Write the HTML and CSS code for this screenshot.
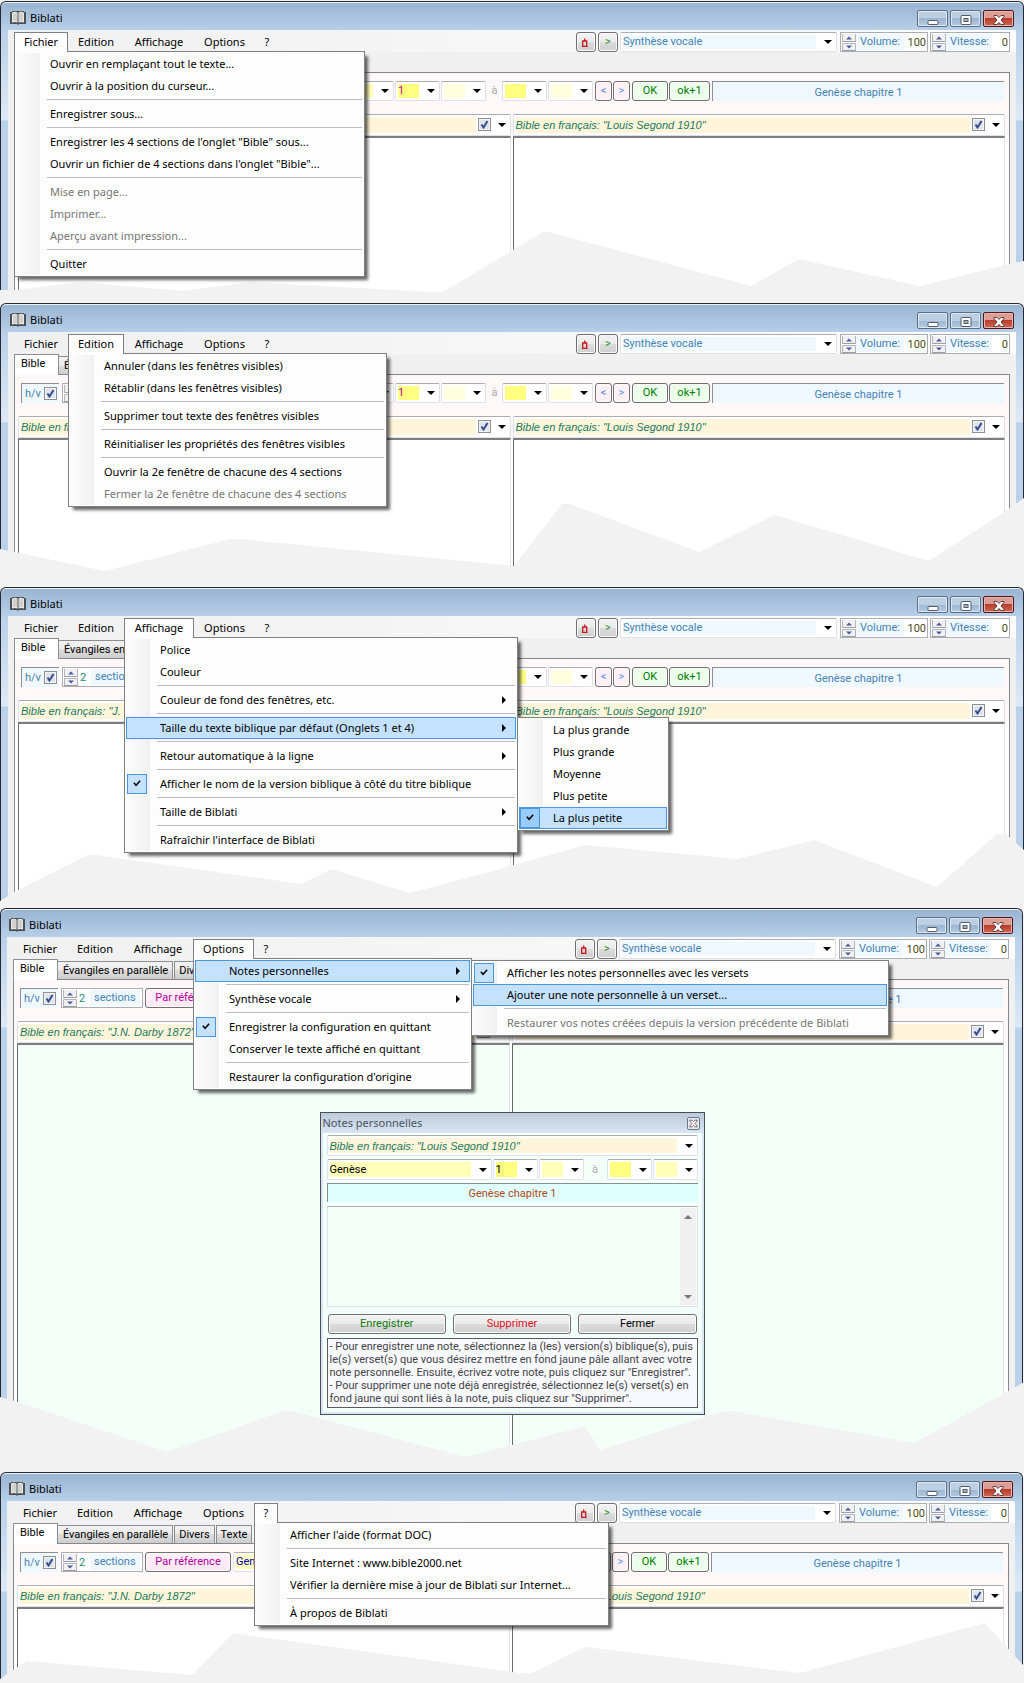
FILE: index.html
```html
<!DOCTYPE html>
<html lang="fr">
<head>
<meta charset="utf-8">
<title>Biblati - menus</title>
<link rel="stylesheet" href="styles.css">
</head>
<body>
<svg class="defs" width="0" height="0" aria-hidden="true">
  <symbol id="book" viewBox="0 0 16 14">
    <path d="M0 1h2v-1h12v1h2v12h-7l-1 1-1-1H0z" fill="#4b5055"/>
    <path d="M2 1.500q3-1.500 5.500 0v10q-2.500-1-5.500 0zM14 1.500q-3-1.500-5.500 0v10q2.500-1 5.500 0z" fill="#e9e9e4"/>
    <path d="M4 2v8M6 2v8M10 2v8M12 2v8" stroke="#b9bab6"/>
  </symbol>
  <symbol id="min" viewBox="0 0 12 10"><rect x="1" y="5.500" width="10" height="4" rx="1" fill="#fff" stroke="#535b66"/></symbol>
  <symbol id="max" viewBox="0 0 12 10"><rect x="1" y=".5" width="10" height="9" rx="1" fill="#fff" stroke="#535b66"/><rect x="4" y="3.500" width="4" height="3" fill="#9fb7d0" stroke="#535b66"/></symbol>
  <symbol id="close" viewBox="0 0 12 10"><path d="M1 .5h3l2 2 2-2h3v1L8 5l3 3.500v1H8l-2-2-2 2H1v-1L4 5 1 1.500z" fill="#fff" stroke="#5c3a3a"/></symbol>
  <symbol id="updown" viewBox="0 0 14 17">
    <path d="M.5 0v7.500h13V0M.5 17V9.500h13V17" fill="#f1f1f4" stroke="#b4b5bb"/>
    <path d="M.5 7.500h13M.5 16.500h13" stroke="#9d9ea4"/>
    <path d="M4 5.500h6L7 2.500zM4 11.500h6L7 14.500z" fill="#4d5a9c"/>
  </symbol>
  <symbol id="tick" viewBox="0 0 20 20"><path d="M6.500 8.500L9 11.500 13.500 6.500" fill="none" stroke="#000" stroke-width="1.700"/></symbol>
  <symbol id="arrow" viewBox="0 0 4 8"><path d="M0 0l4 4-4 4z"/></symbol>
  <symbol id="bell" viewBox="0 0 8 9"><path d="M1 8.500h5.500M1.700 8V3h4v5M3.700 3V.5" fill="none" stroke="#c8141e" stroke-width="1.300"/></symbol>
</svg>

<section class="shot">
  <div class="window">
    <header class="titlebar"><svg class="book"><use href="#book"/></svg><h1>Biblati</h1>
      <button class="cap" aria-label="Réduire"><svg><use href="#min"/></svg></button><button class="cap" aria-label="Agrandir"><svg><use href="#max"/></svg></button><button class="cap close" aria-label="Fermer"><svg><use href="#close"/></svg></button></header>
    <div class="client">
      <div class="menubar">
        <ul class="menus">
          <li><button class="top open">Fichier</button>
            <ul class="drop w-file">
              <li><button>Ouvrir en remplaçant tout le texte...</button></li>
              <li><button>Ouvrir à la position du curseur...</button></li>
              <li class="sep"></li>
              <li><button>Enregistrer sous...</button></li>
              <li class="sep"></li>
              <li><button>Enregistrer les 4 sections de l'onglet "Bible" sous...</button></li>
              <li><button>Ouvrir un fichier de 4 sections dans l'onglet "Bible"...</button></li>
              <li class="sep"></li>
              <li><button disabled>Mise en page...</button></li>
              <li><button disabled>Imprimer...</button></li>
              <li><button disabled>Aperçu avant impression...</button></li>
              <li class="sep"></li>
              <li><button>Quitter</button></li>
            </ul></li>
          <li><button class="top">Edition</button></li>
          <li><button class="top">Affichage</button></li>
          <li><button class="top">Options</button></li>
          <li><button class="top">?</button></li>
        </ul>
        <div class="voice">
          <button class="btn sq" aria-label="Alerte"><svg class="bell"><use href="#bell"/></svg></button><button class="btn sq go">&gt;</button>
          <select class="combo blue" aria-label="Voix"><option>Synthèse vocale</option></select>
          <label class="spin vol"><svg class="ud"><use href="#updown"/></svg><span>Volume:</span><input value="100"></label>
          <label class="spin rate"><svg class="ud"><use href="#updown"/></svg><span>Vitesse:</span><input value="0"></label>
        </div>
      </div>
      <div class="tabs"><button class="tab on">Bible</button></div>
      <div class="panel">
        <div class="tools">
          <div class="lead"></div>
          <select class="combo pale num" aria-label="Livre"><option></option></select>
          <select class="combo yellow num purple" aria-label="Chapitre"><option>1</option></select>
          <select class="combo ivory num" aria-label="Verset"><option></option></select>
          <span class="to">à</span>
          <select class="combo yellow num" aria-label="Chapitre final"><option></option></select>
          <select class="combo ivory num" aria-label="Verset final"><option></option></select>
          <button class="btn nav">&lt;</button><button class="btn nav">&gt;</button>
          <button class="btn ok">OK</button><button class="btn ok wide">ok+1</button>
          <output class="status">Genèse chapitre 1</output>
        </div>
        <div class="panes">
          <div class="pane"><div class="version"><select class="combo cream" aria-label="Version"><option></option></select><input type="checkbox" class="chk" checked aria-label="Afficher"></div><div class="text"></div></div>
          <div class="pane"><div class="version"><select class="combo cream" aria-label="Version"><option>Bible en français: "Louis Segond 1910"</option></select><input type="checkbox" class="chk" checked aria-label="Afficher"></div><div class="text h1"></div></div>
        </div>
      </div>
    </div>
  </div>
  <svg class="torn" viewBox="0 0 1024 302" preserveAspectRatio="none"><path d="M0 290H15L80 282 183 291 250 282 430 292H443L543 232H549L751 286 799 259 920 286 1013 263 1024 261V302H0z"/></svg>
</section>

<section class="shot">
  <div class="window">
    <header class="titlebar"><svg class="book"><use href="#book"/></svg><h1>Biblati</h1>
      <button class="cap" aria-label="Réduire"><svg><use href="#min"/></svg></button><button class="cap" aria-label="Agrandir"><svg><use href="#max"/></svg></button><button class="cap close" aria-label="Fermer"><svg><use href="#close"/></svg></button></header>
    <div class="client">
      <div class="menubar">
        <ul class="menus">
          <li><button class="top">Fichier</button></li>
          <li><button class="top open">Edition</button>
            <ul class="drop w-edit">
              <li><button>Annuler (dans les fenêtres visibles)</button></li>
              <li><button>Rétablir (dans les fenêtres visibles)</button></li>
              <li class="sep"></li>
              <li><button>Supprimer tout texte des fenêtres visibles</button></li>
              <li class="sep"></li>
              <li><button>Réinitialiser les propriétés des fenêtres visibles</button></li>
              <li class="sep"></li>
              <li><button>Ouvrir la 2e fenêtre de chacune des 4 sections</button></li>
              <li><button disabled>Fermer la 2e fenêtre de chacune des 4 sections</button></li>
            </ul></li>
          <li><button class="top">Affichage</button></li>
          <li><button class="top">Options</button></li>
          <li><button class="top">?</button></li>
        </ul>
        <div class="voice">
          <button class="btn sq" aria-label="Alerte"><svg class="bell"><use href="#bell"/></svg></button><button class="btn sq go">&gt;</button>
          <select class="combo blue" aria-label="Voix"><option>Synthèse vocale</option></select>
          <label class="spin vol"><svg class="ud"><use href="#updown"/></svg><span>Volume:</span><input value="100"></label>
          <label class="spin rate"><svg class="ud"><use href="#updown"/></svg><span>Vitesse:</span><input value="0"></label>
        </div>
      </div>
      <div class="tabs"><button class="tab on">Bible</button><button class="tab">É</button></div>
      <div class="panel">
        <div class="tools">
          <div class="lead">
            <label class="hv">h/v<input type="checkbox" class="chk" checked></label>
            <div class="spin sect"><svg class="ud"><use href="#updown"/></svg></div>
          </div>
          <select class="combo pale num" aria-label="Livre"><option></option></select>
          <select class="combo yellow num purple" aria-label="Chapitre"><option>1</option></select>
          <select class="combo ivory num" aria-label="Verset"><option></option></select>
          <span class="to">à</span>
          <select class="combo yellow num" aria-label="Chapitre final"><option></option></select>
          <select class="combo ivory num" aria-label="Verset final"><option></option></select>
          <button class="btn nav">&lt;</button><button class="btn nav">&gt;</button>
          <button class="btn ok">OK</button><button class="btn ok wide">ok+1</button>
          <output class="status">Genèse chapitre 1</output>
        </div>
        <div class="panes">
          <div class="pane"><div class="version"><select class="combo cream" aria-label="Version"><option>Bible en français</option></select><input type="checkbox" class="chk" checked aria-label="Afficher"></div><div class="text"></div></div>
          <div class="pane"><div class="version"><select class="combo cream" aria-label="Version"><option>Bible en français: "Louis Segond 1910"</option></select><input type="checkbox" class="chk" checked aria-label="Afficher"></div><div class="text h2"></div></div>
        </div>
      </div>
    </div>
  </div>
  <svg class="torn" viewBox="0 0 1024 284" preserveAspectRatio="none"><path d="M0 247L15 250 105 269 230 237H240L514 264 562 202H570L699 250 775 213 929 259 1010 206 1024 196V284H0z"/></svg>
</section>

<section class="shot">
  <div class="window">
    <header class="titlebar"><svg class="book"><use href="#book"/></svg><h1>Biblati</h1>
      <button class="cap" aria-label="Réduire"><svg><use href="#min"/></svg></button><button class="cap" aria-label="Agrandir"><svg><use href="#max"/></svg></button><button class="cap close" aria-label="Fermer"><svg><use href="#close"/></svg></button></header>
    <div class="client">
      <div class="menubar">
        <ul class="menus">
          <li><button class="top">Fichier</button></li>
          <li><button class="top">Edition</button></li>
          <li><button class="top open">Affichage</button>
            <ul class="drop w-view">
              <li><button>Police</button></li>
              <li><button>Couleur</button></li>
              <li class="sep"></li>
              <li><button>Couleur de fond des fenêtres, etc.<svg class="more"><use href="#arrow"/></svg></button></li>
              <li class="sep"></li>
              <li><button class="hot">Taille du texte biblique par défaut (Onglets 1 et 4)<svg class="more"><use href="#arrow"/></svg></button>
                <ul class="drop sub w-size">
                  <li><button>La plus grande</button></li>
                  <li><button>Plus grande</button></li>
                  <li><button>Moyenne</button></li>
                  <li><button>Plus petite</button></li>
                  <li><button class="hot"><svg class="mark deep"><use href="#tick"/></svg>La plus petite</button></li>
                </ul></li>
              <li class="sep"></li>
              <li><button>Retour automatique à la ligne<svg class="more"><use href="#arrow"/></svg></button></li>
              <li class="sep"></li>
              <li><button><svg class="mark"><use href="#tick"/></svg>Afficher le nom de la version biblique à côté du titre biblique</button></li>
              <li class="sep"></li>
              <li><button>Taille de Biblati<svg class="more"><use href="#arrow"/></svg></button></li>
              <li class="sep"></li>
              <li><button>Rafraîchir l'interface de Biblati</button></li>
            </ul></li>
          <li><button class="top">Options</button></li>
          <li><button class="top">?</button></li>
        </ul>
        <div class="voice">
          <button class="btn sq" aria-label="Alerte"><svg class="bell"><use href="#bell"/></svg></button><button class="btn sq go">&gt;</button>
          <select class="combo blue" aria-label="Voix"><option>Synthèse vocale</option></select>
          <label class="spin vol"><svg class="ud"><use href="#updown"/></svg><span>Volume:</span><input value="100"></label>
          <label class="spin rate"><svg class="ud"><use href="#updown"/></svg><span>Vitesse:</span><input value="0"></label>
        </div>
      </div>
      <div class="tabs"><button class="tab on">Bible</button><button class="tab">Évangiles en</button></div>
      <div class="panel">
        <div class="tools">
          <div class="lead">
            <label class="hv">h/v<input type="checkbox" class="chk" checked></label>
            <label class="spin sect"><svg class="ud"><use href="#updown"/></svg><input value="2"><span>sections</span></label>
          </div>
          <select class="combo pale num" aria-label="Livre"><option></option></select>
          <select class="combo yellow num" aria-label="Chapitre"><option></option></select>
          <select class="combo ivory num" aria-label="Verset"><option></option></select>
          <span class="to"></span>
          <select class="combo yellow num" aria-label="Chapitre final"><option></option></select>
          <select class="combo ivory num" aria-label="Verset final"><option></option></select>
          <button class="btn nav">&lt;</button><button class="btn nav">&gt;</button>
          <button class="btn ok">OK</button><button class="btn ok wide">ok+1</button>
          <output class="status">Genèse chapitre 1</output>
        </div>
        <div class="panes">
          <div class="pane"><div class="version"><select class="combo cream" aria-label="Version"><option>Bible en français: "J.</option></select></div><div class="text"></div></div>
          <div class="pane"><div class="version"><select class="combo cream" aria-label="Version"><option>Bible en français: "Louis Segond 1910"</option></select><input type="checkbox" class="chk" checked aria-label="Afficher"></div><div class="text h3"></div></div>
        </div>
      </div>
    </div>
  </div>
  <svg class="torn" viewBox="0 0 1024 321" preserveAspectRatio="none"><path d="M0 315L14 306 88 269H96L302 298 331 283 410 307 500 283 585 259 737 273 814 254 937 301 997 248H1006L1024 264V321H0z"/></svg>
</section>

<section class="shot narrow">
  <div class="window">
    <header class="titlebar"><svg class="book"><use href="#book"/></svg><h1>Biblati</h1>
      <button class="cap" aria-label="Réduire"><svg><use href="#min"/></svg></button><button class="cap" aria-label="Agrandir"><svg><use href="#max"/></svg></button><button class="cap close" aria-label="Fermer"><svg><use href="#close"/></svg></button></header>
    <div class="client">
      <div class="menubar">
        <ul class="menus">
          <li><button class="top">Fichier</button></li>
          <li><button class="top">Edition</button></li>
          <li><button class="top">Affichage</button></li>
          <li><button class="top open">Options</button>
            <ul class="drop w-opt">
              <li><button class="hot">Notes personnelles<svg class="more"><use href="#arrow"/></svg></button>
                <ul class="drop sub w-notes">
                  <li><button><svg class="mark"><use href="#tick"/></svg>Afficher les notes personnelles avec les versets</button></li>
                  <li><button class="hot">Ajouter une note personnelle à un verset...</button></li>
                  <li class="sep"></li>
                  <li><button disabled>Restaurer vos notes créées depuis la version précédente de Biblati</button></li>
                </ul></li>
              <li class="sep"></li>
              <li><button>Synthèse vocale<svg class="more"><use href="#arrow"/></svg></button></li>
              <li class="sep"></li>
              <li><button><svg class="mark"><use href="#tick"/></svg>Enregistrer la configuration en quittant</button></li>
              <li><button>Conserver le texte affiché en quittant</button></li>
              <li class="sep"></li>
              <li><button>Restaurer la configuration d'origine</button></li>
            </ul></li>
          <li><button class="top">?</button></li>
        </ul>
        <div class="voice">
          <button class="btn sq" aria-label="Alerte"><svg class="bell"><use href="#bell"/></svg></button><button class="btn sq go">&gt;</button>
          <select class="combo blue" aria-label="Voix"><option>Synthèse vocale</option></select>
          <label class="spin vol"><svg class="ud"><use href="#updown"/></svg><span>Volume:</span><input value="100"></label>
          <label class="spin rate"><svg class="ud"><use href="#updown"/></svg><span>Vitesse:</span><input value="0"></label>
        </div>
      </div>
      <div class="tabs"><button class="tab on">Bible</button><button class="tab">Évangiles en parallèle</button><button class="tab">Divers</button></div>
      <div class="panel">
        <div class="tools">
          <div class="lead to-status">
            <label class="hv">h/v<input type="checkbox" class="chk" checked></label>
            <label class="spin sect"><svg class="ud"><use href="#updown"/></svg><input value="2"><span>sections</span></label>
            <button class="btn ref">Par référence</button>
          </div>
          <output class="status">Genèse chapitre 1</output>
        </div>
        <div class="panes mint">
          <div class="pane"><div class="version"><select class="combo cream" aria-label="Version"><option>Bible en français: "J.N. Darby 1872"</option></select><input type="checkbox" class="chk" checked aria-label="Afficher"></div><div class="text"></div></div>
          <div class="pane"><div class="version"><select class="combo cream" aria-label="Version"><option></option></select><input type="checkbox" class="chk" checked aria-label="Afficher"></div><div class="text h4"></div></div>
        </div>
      </div>
    </div>
  </div>
  <svg class="torn" viewBox="0 0 1024 564" preserveAspectRatio="none"><path d="M0 490L18 495 167 545 283 504H292L466 550 585 519 600 543 724 504H732L914 536 1021 477 1024 475V564H0z"/></svg>
  <form class="dialog">
    <div class="dlg-title"><h2>Notes personnelles</h2><button type="button" aria-label="Fermer la fenêtre"><svg><use href="#close"/></svg></button></div>
    <div class="dlg-body">
      <select class="combo cream short" aria-label="Version"><option>Bible en français: "Louis Segond 1910"</option></select>
      <div class="ref-row">
        <select class="combo pale bookname" aria-label="Livre"><option>Genèse</option></select>
        <select class="combo yellow num" aria-label="Chapitre"><option>1</option></select>
        <select class="combo pale num" aria-label="Verset"><option></option></select>
        <span class="to">à</span>
        <select class="combo yellow num" aria-label="Chapitre final"><option></option></select>
        <select class="combo pale num" aria-label="Verset final"><option></option></select>
      </div>
      <output class="passage">Genèse chapitre 1</output>
      <div class="note"><textarea aria-label="Note"></textarea><div class="scroll"><svg viewBox="0 0 8 4"><path d="M0 4h8L4 0z"/></svg><svg viewBox="0 0 8 4"><path d="M0 0h8L4 4z"/></svg></div></div>
      <div class="actions"><button type="button" class="btn save">Enregistrer</button><button type="button" class="btn del">Supprimer</button><button type="button" class="btn">Fermer</button></div>
      <p class="help">- Pour enregistrer une note, sélectionnez la (les) version(s) biblique(s), puis<br>le(s) verset(s) que vous désirez mettre en fond jaune pâle allant avec votre<br>note personnelle. Ensuite, écrivez votre note, puis cliquez sur "Enregistrer".<br>- Pour supprimer une note déjà enregistrée, sélectionnez le(s) verset(s) en<br>fond jaune qui sont liés à la note, puis cliquez sur "Supprimer".</p>
    </div>
  </form>
</section>

<section class="shot narrow">
  <div class="window">
    <header class="titlebar"><svg class="book"><use href="#book"/></svg><h1>Biblati</h1>
      <button class="cap" aria-label="Réduire"><svg><use href="#min"/></svg></button><button class="cap" aria-label="Agrandir"><svg><use href="#max"/></svg></button><button class="cap close" aria-label="Fermer"><svg><use href="#close"/></svg></button></header>
    <div class="client">
      <div class="menubar">
        <ul class="menus">
          <li><button class="top">Fichier</button></li>
          <li><button class="top">Edition</button></li>
          <li><button class="top">Affichage</button></li>
          <li><button class="top">Options</button></li>
          <li><button class="top open">?</button>
            <ul class="drop w-help">
              <li><button>Afficher l'aide (format DOC)</button></li>
              <li class="sep"></li>
              <li><button>Site Internet : www.bible2000.net</button></li>
              <li><button>Vérifier la dernière mise à jour de Biblati sur Internet...</button></li>
              <li class="sep"></li>
              <li><button>À propos de Biblati</button></li>
            </ul></li>
        </ul>
        <div class="voice">
          <button class="btn sq" aria-label="Alerte"><svg class="bell"><use href="#bell"/></svg></button><button class="btn sq go">&gt;</button>
          <select class="combo blue" aria-label="Voix"><option>Synthèse vocale</option></select>
          <label class="spin vol"><svg class="ud"><use href="#updown"/></svg><span>Volume:</span><input value="100"></label>
          <label class="spin rate"><svg class="ud"><use href="#updown"/></svg><span>Vitesse:</span><input value="0"></label>
        </div>
      </div>
      <div class="tabs"><button class="tab on">Bible</button><button class="tab">Évangiles en parallèle</button><button class="tab">Divers</button><button class="tab">Texte</button></div>
      <div class="panel">
        <div class="tools">
          <div class="lead to-nav">
            <label class="hv">h/v<input type="checkbox" class="chk" checked></label>
            <label class="spin sect"><svg class="ud"><use href="#updown"/></svg><input value="2"><span>sections</span></label>
            <button class="btn ref">Par référence</button>
            <select class="combo pale book-first navy" aria-label="Livre"><option>Gen</option></select>
          </div>
          <button class="btn nav" aria-label="Précédent"></button><button class="btn nav">&gt;</button>
          <button class="btn ok">OK</button><button class="btn ok wide">ok+1</button>
          <output class="status">Genèse chapitre 1</output>
        </div>
        <div class="panes">
          <div class="pane"><div class="version"><select class="combo cream" aria-label="Version"><option>Bible en français: "J.N. Darby 1872"</option></select></div><div class="text"></div></div>
          <div class="pane"><div class="version"><select class="combo cream" aria-label="Version"><option>Bible en français: "Louis Segond 1910"</option></select><input type="checkbox" class="chk" checked aria-label="Afficher"></div><div class="text h5"></div></div>
        </div>
      </div>
    </div>
  </div>
  <svg class="torn" viewBox="0 0 1024 212" preserveAspectRatio="none"><path d="M0 208L13 199 27 190 192 204 233 162 512 201 530 203 585 176 800 202 985 152 1024 195V212H0z"/></svg>
</section>
</body>
</html>
```
FILE: styles.css
```css
* { box-sizing: border-box; }
body { margin: 0; background: #f2f2f2; font: 11px/14px Roboto, "Liberation Sans", sans-serif; color: #000; }
button, select, input, textarea { font: inherit; color: inherit; margin: 0; border-radius: 0; }
ul { list-style: none; margin: 0; padding: 0; }
svg { display: block; }
.defs { position: absolute; }

.shot { position: relative; padding-top: 1px; background: #f2f2f2; }
.window { border: 1px solid #262b33; border-bottom: 0; border-radius: 6px 6px 0 0; padding: 0 7px; box-shadow: inset 0 1px #eaf2fa;
  background: linear-gradient(#99b4d1, #b9d1ea 30px, #dde9f6 118px, #b9d1ea 119px); }
.narrow .window { margin-right: 1px; padding-left: 6px; }

.titlebar { display: flex; align-items: flex-start; height: 28px; padding: 8px 2px 0 2px; }
.titlebar h1 { flex: 1; margin: 0 0 0 4px; padding-top: 1px; font: 11px/14px "Noto Sans", sans-serif; }
.book { width: 16px; height: 14px; margin-top: 1px; }
.cap { width: 31px; height: 17px; margin-left: 2px; padding: 3px 0 0 9px; border: 1px solid #5d6f86; border-radius: 2px; box-shadow: inset 0 0 0 1px #dbe7f3;
  background: linear-gradient(#bccfe3 50%, #9db6d1 50%, #b3cae2); }
.cap svg { width: 12px; height: 10px; }
.cap.close { border-color: #53161b; background: linear-gradient(#dc9d94 45%, #b93c2b 50%, #cc6a55); box-shadow: inset 0 0 0 1px #e5b5ae; }

.client { background: #f0f0f0; }
.menubar { display: flex; justify-content: space-between; align-items: flex-start; height: 22px; padding: 2px 6px 0; background: linear-gradient(90deg, #f0f0f0, #fcfcfc); }
.menus { display: grid; grid-template-columns: 54px 56px 70px 61px 24px; font: 11px/18px "Noto Sans", sans-serif; }
.menus li { position: relative; }
.top { display: block; width: 100%; height: 19px; padding: 0; border: 1px solid transparent; border-bottom: 0; background: none; text-align: center; }
.top.open { position: relative; z-index: 5; height: 20px; padding-bottom: 1px; border-color: #808080; background: #fdfdfd; }

.drop { position: absolute; z-index: 4; left: 0; top: 19px; padding: 1px; border: 1px solid #808080; box-shadow: 4px 4px 3px -1px #0009;
  background: linear-gradient(90deg, #fcfcfc, #f1f1f1) 1px 1px / 24px calc(100% - 2px) no-repeat, #fdfdfd; }
.drop.sub { z-index: 6; left: calc(100% + 1px); top: 0; }
.drop button { position: relative; display: flex; align-items: center; width: 100%; height: 22px; padding: 0 9px 0 33px; border: 1px solid transparent; background: none; line-height: 18px; text-align: left; white-space: nowrap; }
.drop button:disabled { color: #777; }
.drop button.hot { border-color: #4a97dc; background: #c4e1ff; }
.sep { height: 6px; padding-top: 2px; }
.sep::before { content: ""; display: block; height: 1px; margin: 0 1px 0 31px; background: #bdbdbd; }
.more { width: 4px; height: 8px; margin-left: auto; }
.mark { position: absolute; left: 0; top: 0; width: 20px; height: 20px; border: 1px solid #4a97dc; background: #c4e1ff; }
.mark.deep { background: #99ccff; }
.w-file { width: 351px; }
.w-edit { width: 319px; }
.w-view { width: 394px; }
.w-size { width: 152px; }
.w-opt { width: 279px; }
.w-notes { width: 418px; }
.w-help { width: 355px; }

.voice { display: flex; width: 434px; }
.voice .combo { flex: 1; margin-right: 2px; }
.combo { appearance: none; height: 20px; min-width: 0; padding: 0 20px 0 2px; border: 1px solid #dfe0ea; border-top-color: #abadb3; border-radius: 2px; outline: 0; --tint: #fff; --end: 22px;
  background: url("data:image/svg+xml,%3Csvg xmlns='http://www.w3.org/2000/svg' width='8' height='4'%3E%3Cpath d='M0 0h8L4 4z'/%3E%3C/svg%3E") right 4px center no-repeat,
    linear-gradient(var(--tint), var(--tint)) 2px 2px / calc(100% - var(--end)) calc(100% - 4px) no-repeat, #fff; }
.blue { --tint: #f0f8ff; color: #4682b4; }
.pale { --tint: #ffffb8; }
.yellow { --tint: #ffff80; }
.ivory { --tint: #ffffe0; }
.purple { color: #c000a0; }
.navy { color: #0000c0; }
.num { width: 45px; }
.cream { --tint: #fff5da; --end: 36px; color: #1a7a5e; font: italic 11px/14px "Liberation Sans", sans-serif; }
.cream.short { --end: 22px; }

.btn { height: 20px; padding: 0; border: 1px solid #707070; border-radius: 3px; box-shadow: inset 0 0 0 1px #fafafa; text-align: center; white-space: nowrap; background: linear-gradient(#f2f2f2, #ebebeb 50%, #dcdcdc 50%, #cfcfcf); }
.btn.sq { display: flex; align-items: center; justify-content: center; width: 20px; margin-right: 2px; }
.bell { width: 8px; height: 9px; margin-right: 2px; }
.go { color: #1b8a1b; }
.spin { display: flex; align-items: flex-start; height: 20px; padding: 1px; border: 1px solid #abadb3; background: #fff; color: #4682b4; }
.spin span { height: 16px; padding: 1px 0 0 4px; background: #f0f8ff; }
.spin input { border: 0; padding: 0; height: 16px; min-width: 0; outline: 0; background: none; }
.ud { flex: none; width: 14px; height: 17px; }
.vol { width: 88px; margin-left: 1px; }
.vol span { width: 48px; }
.rate { width: 80px; margin-left: 2px; }
.rate span { width: 46px; }
.vol input, .rate input { flex: 1; width: 0; text-align: right; color: #4a4a10; }

.tabs { display: flex; align-items: flex-end; height: 20px; padding-left: 6px; }
.tab { height: 18px; padding: 0 4px; margin-left: 1px; border: 1px solid #8c8e94; border-bottom: 0; white-space: nowrap; background: linear-gradient(#f2f2f2, #ebebeb 50%, #dddddd 50%, #cdcdcd); }
.tab.on { position: relative; width: 45px; height: 21px; margin: 0 0 -1px; padding: 0 0 2px 6px; text-align: left; background: #fff; }
.tab.on + .tab { margin-left: -1px; padding-left: 5px; }

.panel { margin: 0 6px; padding: 8px 4px 0 3px; border: 1px solid #85878f; border-bottom: 0; background: linear-gradient(#fff8f8 62px, #fff 62px); }
.tools { display: flex; height: 33px; align-items: flex-start; padding-right: 1px; }
.tools > .combo { margin-right: 1px; }
.lead { flex: none; display: flex; width: 331px; padding-left: 3px; }
.lead.to-nav { width: 576px; }
.lead.to-status { width: 692px; }
.hv { display: flex; align-items: center; gap: 3px; width: 38px; height: 20px; padding-left: 3px; border-left: 1px solid #8c8e94; border-top: 1px solid #8c8e94; background: #f0f8ff; color: #4682b4; }
.sect { width: 82px; margin-left: 3px; }
.sect input { width: 11px; margin-left: 2px; color: #1a8a7a; }
.sect span { width: 50px; }
.ref { width: 86px; margin: 0 2px; color: #b000a0; background: linear-gradient(#fff0f8, #ffe6f3); }
.book-first { width: 161px; }
.tools .to { width: 15px; color: #aaa; line-height: 20px; text-align: center; }
.nav { width: 17px; margin-left: 1px; color: #5b8ff0; background: #fff0f5; }
.ok { width: 36px; margin-left: 2px; color: #007a00; background: #ebffeb; }
.ok.wide { width: 41px; margin-left: 1px; }
.status { flex: 1; height: 20px; margin-left: 2px; border-left: 1px solid #8c8e94; border-top: 1px solid #8c8e94; background: #f0f8ff; color: #4682b4; line-height: 21px; text-align: center; }

.panes { display: grid; grid-template-columns: 1fr 1fr; gap: 2px; }
.pane { display: flex; flex-direction: column; }
.version { position: relative; display: flex; }
.version .combo { flex: 1; height: 22px; }
.version .chk { position: absolute; right: 20px; top: 4px; }
.chk { appearance: none; flex: none; width: 13px; height: 13px; border: 1px solid #8e8f8f; box-shadow: inset 0 0 0 1px #f4f4f4; background: #dfe3ea; }
.chk:checked { background: #dfe3ea url("data:image/svg+xml,%3Csvg xmlns='http://www.w3.org/2000/svg' width='11' height='11'%3E%3Cpath d='M2.500 5.500L4.500 8.500 8.500 2' fill='none' stroke='%23354a8f' stroke-width='2'/%3E%3C/svg%3E") center no-repeat; }
.text { flex: 1; border: 1px solid #e3e3e8; border-left: 1px solid #696969; border-top: 2px solid #7d7d7d; border-bottom: 0; background: #fff; }
.mint .text { background: #f3fff9; }
.h1 { min-height: 166px; }
.h2 { min-height: 148px; }
.h3 { min-height: 185px; }
.h4 { min-height: 428px; }
.h5 { min-height: 76px; }

.torn { position: absolute; z-index: 1; left: 0; top: 0; width: 100%; height: 100%; fill: #f2f2f2; pointer-events: none; }

.dialog { position: absolute; z-index: 2; left: 0; right: 0; top: 205px; width: 385px; margin: 0 auto; border: 1px solid #4a4f57; background: #dbe6f5; }
.dlg-title { display: flex; align-items: center; height: 20px; padding: 0 4px 0 2px; background: linear-gradient(#bccbdc, #d8e4f1); }
.dlg-title h2 { flex: 1; margin: 0; font: 11px/18px "Noto Sans", sans-serif; color: #4c5560; }
.dlg-title button { width: 13px; height: 13px; padding: 0 1px; border: 1px solid #6b7787; border-radius: 2px; background: #e3ebf4; }
.dlg-title svg { width: 9px; height: 9px; }
.dlg-body { display: flex; flex-direction: column; gap: 3px; margin: 0 2px 2px; padding: 2px 4px 4px; background: #f3fff9; }
.dlg-body .combo { height: 21px; }
.ref-row { display: flex; gap: 1px; }
.bookname { flex: 1; }
.ref-row .to { width: 21px; color: #aaa; line-height: 21px; text-align: center; }
.passage { height: 19px; margin-bottom: 1px; border-left: 1px solid #8c8e94; border-top: 1px solid #8c8e94; background: #e0ffff; color: #b04a1a; line-height: 20px; text-align: center; }
.note { display: flex; height: 101px; margin-bottom: 4px; padding: 1px; border: 1px solid #dfe0ea; border-top-color: #abadb3; }
.note textarea { flex: 1; border: 0; outline: 0; resize: none; background: none; }
.scroll { display: flex; flex-direction: column; justify-content: space-between; width: 16px; padding: 7px 4px 6px; background: #f0f0f0; }
.scroll svg { width: 8px; height: 4px; fill: #777; }
.actions { display: grid; grid-template-columns: 1fr 1fr 1fr; gap: 7px; padding: 0 1px; }
.save { color: #107a10; }
.del { color: #e0101c; }
.help { margin: 1px 0 0; height: 70px; padding: 1px 2px; border: 1px solid #5a5a60; background: #f8f8ff; color: #444; font-size: 11px; line-height: 13px; white-space: nowrap; }
```
